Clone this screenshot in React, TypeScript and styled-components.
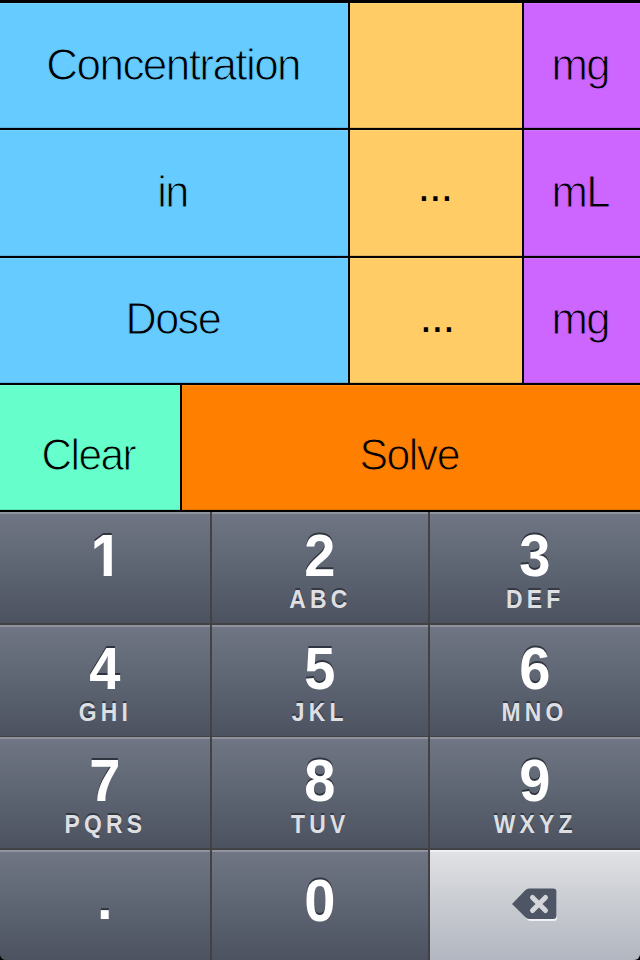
import React from 'react';
import styled, { createGlobalStyle } from 'styled-components';

const GlobalStyle = createGlobalStyle`
  * { box-sizing: border-box; }
  html, body { margin: 0; padding: 0; background: #000; overflow: hidden; }
`;

const Screen = styled.main`
  width: 640px;
  height: 960px;
  display: flex;
  flex-direction: column;
  background: #000;
  border-radius: 2px 2px 6px 6px;
  overflow: hidden;
  font-family: 'Liberation Sans', Arial, sans-serif;
`;

const Form = styled.section`
  display: grid;
  grid-template-columns: 348px 172px 116px;
  grid-template-rows: 125px 125.5px 125.5px;
  gap: 2px;
  padding-top: 3px;
`;

const Actions = styled.section`
  display: grid;
  grid-template-columns: 180px 458px;
  grid-template-rows: 125px;
  gap: 2px;
  padding: 2px 0;
`;

const Cell = styled.div<{ $color: string; $top?: number }>`
  display: flex;
  align-items: center;
  justify-content: center;
  padding-top: ${p => p.$top ?? 0}px;
  background: ${p => p.$color};
  color: ${p => p.$color};
  box-shadow: inset 0 1px rgba(255, 255, 255, 0.12), inset 0 -1px rgba(0, 0, 0, 0.12);
`;

/* The outline takes the cell colour, which trims the strokes to a light weight. */
const Label = styled.span<{ $x?: number; $y?: number; $scale?: number }>`
  font-size: 45px;
  line-height: 52px;
  letter-spacing: -1.6px;
  white-space: nowrap;
  -webkit-text-fill-color: #000;
  -webkit-text-stroke: 1px currentColor;
  transform: translate(${p => p.$x ?? -1}px, ${p => p.$y ?? -1}px) scaleX(${p => p.$scale ?? 0.97});
`;

const Dots = styled.span<{ $x: number; $y: number }>`
  color: #000;
  font-size: 44px;
  line-height: 52px;
  letter-spacing: -0.7px;
  transform: translate(${p => p.$x}px, ${p => p.$y}px);
`;

const Keypad = styled.section`
  display: grid;
  grid-template-columns: 210px 216px 210px;
  grid-template-rows: 111px 111px 111px 111px;
  column-gap: 2px;
  row-gap: 1.5px;
  background: #424245;
  height: 448px;
`;

const Key = styled.button<{ $light?: boolean }>`
  display: flex;
  flex-direction: column;
  align-items: center;
  border: 0;
  padding: 19px 0 0;
  margin: 0;
  font-family: inherit;
  background: ${p => p.$light
    ? 'linear-gradient(#e1e2e6, #cacdd2 45%, #b2b6c0)'
    : 'linear-gradient(#707684, #5f6673 48%, #4c5260)'};
  box-shadow: inset 0 2px ${p => (p.$light ? '#f0f0f2' : '#8e939d')};
`;

const Digit = styled.span<{ $y?: number; $plain?: boolean }>`
  font-family: ${p => (p.$plain ? 'Inter, sans-serif' : 'inherit')};
  font-size: ${p => (p.$plain ? 57 : 59)}px;
  line-height: 50px;
  font-weight: 700;
  color: #fff;
  text-shadow: 0 -2px #30343e;
  transform: translate(${p => (p.$plain ? -1.5 : -0.5)}px, ${p => p.$y ?? 0}px) scaleX(0.95);
`;

const Letters = styled.span`
  font-size: 26px;
  line-height: 28px;
  font-weight: 700;
  letter-spacing: 4.8px;
  margin: 4px 0 0;
  color: #dedfe2;
  text-shadow: 0 -2px #343944;
  transform: scaleX(0.88);
`;

const EraseIcon = styled.svg`
  width: 48px;
  height: 36px;
  margin-top: 18px;
`;

const rows = [
  { name: 'Concentration', unit: 'mg', value: '' },
  { name: 'in', unit: 'mL', value: '...' },
  { name: 'Dose', unit: 'mg', value: '...' },
];

const keys: [string, string][] = [
  ['1', ''], ['2', 'ABC'], ['3', 'DEF'],
  ['4', 'GHI'], ['5', 'JKL'], ['6', 'MNO'],
  ['7', 'PQRS'], ['8', 'TUV'], ['9', 'WXYZ'],
  ['.', ''], ['0', ''],
];

export default function App() {
  return (
    <>
      <GlobalStyle />
      <Screen>
        <Form>
          {rows.map((row, i) => (
            <React.Fragment key={row.name}>
              <Cell $color="#66ccff">
                <Label $x={i === 0 ? -0.5 : -1.5} $scale={i === 0 ? 0.978 : 0.96}>{row.name}</Label>
              </Cell>
              <Cell $color="#ffcc66">
                {row.value && <Dots $x={i === 1 ? -1 : 1} $y={i === 1 ? -7 : -3}>{row.value}</Dots>}
              </Cell>
              <Cell $color="#cc66ff"><Label $x={-1.5}>{row.unit}</Label></Cell>
            </React.Fragment>
          ))}
        </Form>
        <Actions>
          <Cell $color="#66ffcc" $top={14}><Label $x={-1.5} $y={0} $scale={0.94}>Clear</Label></Cell>
          <Cell $color="#ff8000" $top={14}><Label $x={-2} $y={0} $scale={0.95}>Solve</Label></Cell>
        </Actions>
        <Keypad>
          {keys.map(([digit, letters]) => (
            <Key key={digit}>
              <Digit $plain={digit === '1'} $y={digit === '0' ? 7 : digit === '.' ? 5 : 0}>{digit}</Digit>
              {letters && <Letters>{letters}</Letters>}
            </Key>
          ))}
          <Key $light aria-label="Delete">
            <EraseIcon viewBox="0 0 48 36">
              <path d="M2 18 15 4.5Q17 2 20 2h23q3 0 3 3v26q0 3-3 3H20q-3 0-5-2.5Z" fill="#f1f2f4" />
              <path d="M1 17 14 3.5Q16 1.5 18 1.5h24q3.5 0 3.5 3v24q0 3.5-3.5 3.5H18q-2 0-4-2Z" fill="#4e5564" />
              <path d="m21.5 10.5 13 13M34.5 10.5l-13 13" stroke="#d4d6da" strokeWidth="5" strokeLinecap="round" />
            </EraseIcon>
          </Key>
        </Keypad>
      </Screen>
    </>
  );
}
